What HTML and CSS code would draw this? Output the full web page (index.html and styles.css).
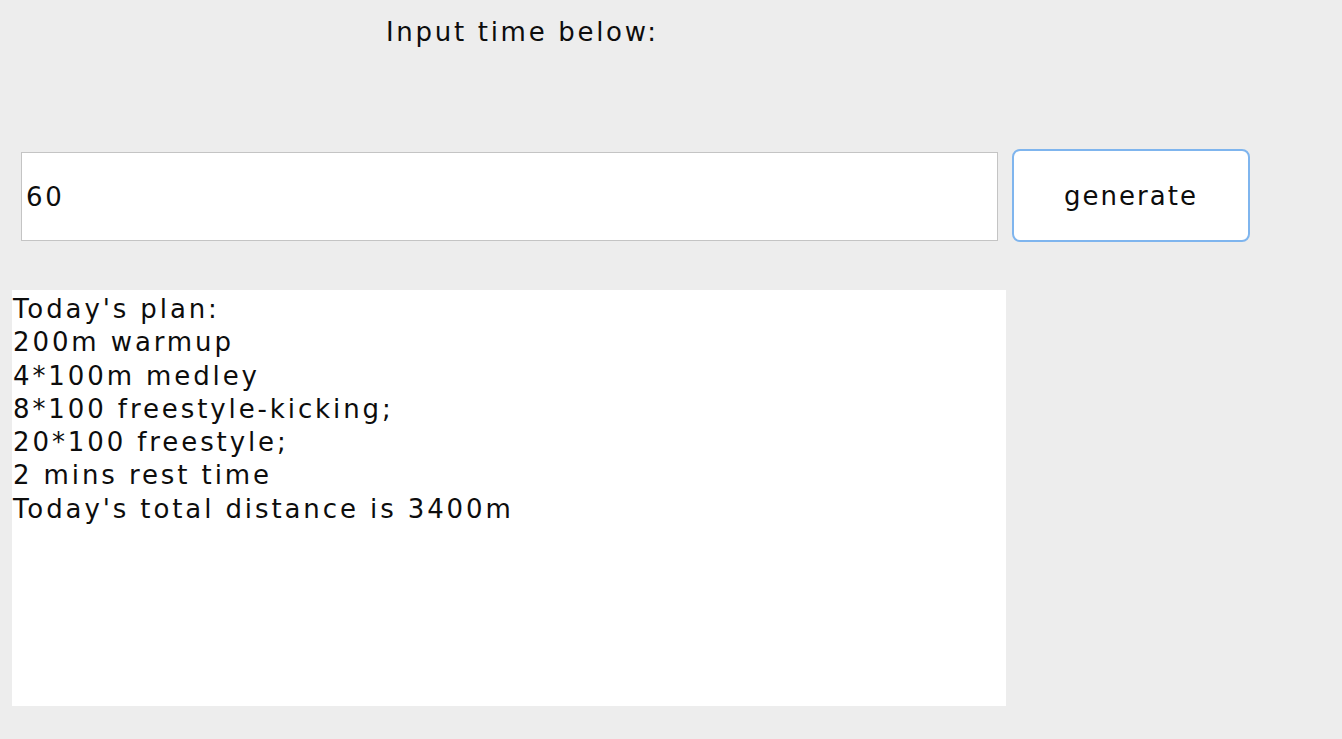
FILE: index.html
```html
<!DOCTYPE html>
<html>
<head>
<meta charset="utf-8">
<link rel="stylesheet" href="styles.css">
</head>
<body>
<div class="app">
  <div class="header">
    <div class="label">Input time below:</div>
  </div>
  <div class="controls">
    <div class="field">60</div>
    <div class="button">generate</div>
  </div>
  <div class="output">
    <div class="line">Today's plan:</div>
    <div class="line">200m warmup</div>
    <div class="line">4*100m medley</div>
    <div class="line">8*100 freestyle-kicking;</div>
    <div class="line">20*100 freestyle;</div>
    <div class="line">2 mins rest time</div>
    <div class="line">Today's total distance is 3400m</div>
  </div>
</div>
</body>
</html>
```
FILE: styles.css
```css
html, body {
  margin: 0;
  padding: 0;
  background: #ededed;
}
body {
  width: 1342px;
  height: 739px;
  overflow: hidden;
  font-family: "DejaVu Sans", "Liberation Sans", sans-serif;
  color: #0d0d0d;
  font-size: 26px;
  letter-spacing: 2.6px;
}
.app {
  display: flex;
  flex-direction: column;
}
.header {
  height: 149px;
  display: flex;
}
.label {
  margin-left: 386px;
  margin-top: 17px;
  line-height: 30px;
  letter-spacing: 2.7px;
}
.controls {
  display: flex;
  align-items: center;
  height: 93px;
  padding-left: 21px;
  gap: 14px;
}
.field {
  box-sizing: border-box;
  width: 977px;
  height: 89px;
  margin-top: 2px;
  background: #fff;
  border: 1px solid #c4c4c4;
  display: flex;
  align-items: center;
  padding-left: 4px;
}
.button {
  box-sizing: border-box;
  width: 238px;
  height: 93px;
  background: #fff;
  border: 2px solid #7fb5ee;
  border-radius: 8px;
  display: flex;
  align-items: center;
  justify-content: center;
  letter-spacing: 2px;
}
.output {
  box-sizing: border-box;
  margin-top: 48px;
  margin-left: 12px;
  width: 994px;
  height: 416px;
  background: #fff;
  padding-top: 3px;
  padding-left: 1px;
  line-height: 33.3px;
  letter-spacing: 2.9px;
}
```
